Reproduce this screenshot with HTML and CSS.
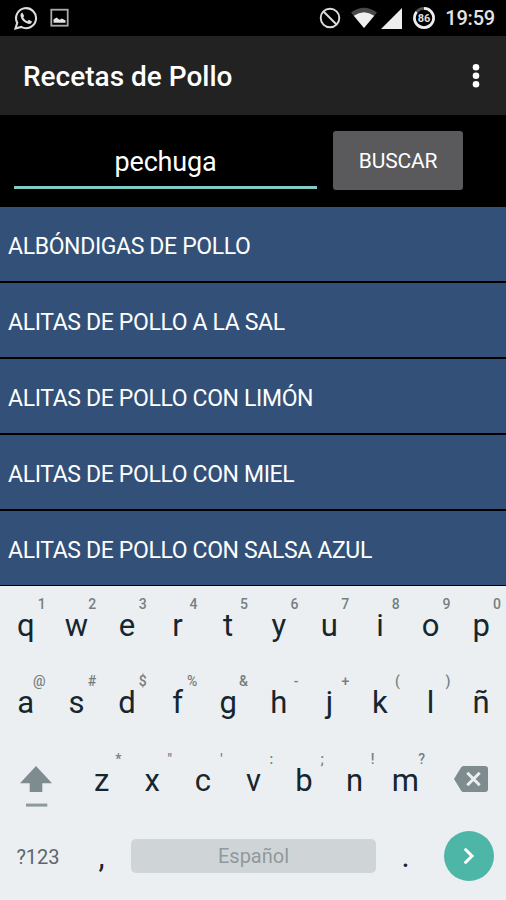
FILE: index.html
```html
<!DOCTYPE html>
<html lang="es">

<head>
	<meta charset="utf-8">
	<title>Recetas de Pollo</title>
	<link rel="stylesheet" href="styles.css">
</head>

<body>
	<div class="status-bar">
		<svg class="icon-whatsapp" width="24" height="25" viewBox="0 0 24 25">
			<path d="M1.5 22.5 L3.2 16.8 A10 10 0 1 1 7.2 20.9 Z" fill="none" stroke="#ddd" stroke-width="2.1" />
			<path d="M8.3 6.5 L10.2 10 L9.2 11.6 Q10.6 14.2 13.3 15.2 L14.9 13.7 L18 15.4 Q17.6 18.2 14.8 18 Q7.6 16.3 6.4 9.6 Q6.5 7 8.3 6.5 Z" fill="#ddd" />
		</svg>
		<svg class="icon-picture" width="20" height="20" viewBox="0 0 20 20">
			<rect x="1.3" y="1.7" width="16.4" height="16" fill="none" stroke="#aaa" stroke-width="1.8" />
			<path d="M3.5 14.8 V11.5 L6.5 9.5 L9.5 11.8 L12 10.5 L15.5 12.5 V14.8 Z" fill="#e4e4e4" />
		</svg>
		<div class="status-right">
			<svg width="22" height="22" viewBox="0 0 22 22">
				<circle cx="11" cy="11" r="9.3" fill="none" stroke="#ddd" stroke-width="1.9" />
				<path d="M4.5 4.5 L17.5 17.5" stroke="#ddd" stroke-width="1.9" />
			</svg>
			<svg class="icon-wifi" width="28" height="22" viewBox="0 0 28 22">
				<path d="M1 5.5 Q14 -4 27 5.5 L14 21 Z" fill="#484848" />
				<path d="M3.8 8.8 Q14 1.5 24.2 8.8 L14 21 Z" fill="#eee" />
			</svg>
			<svg class="icon-signal" width="21" height="21" viewBox="0 0 21 21">
				<path d="M21 0 V21 H0 Z" fill="#eee" />
			</svg>
			<svg class="icon-battery" width="24" height="24" viewBox="0 0 24 24">
				<circle cx="12" cy="12" r="9.6" fill="none" stroke="#555" stroke-width="2.6" />
				<circle cx="12" cy="12" r="9.6" fill="none" stroke="#eee" stroke-width="2.6" pathLength="100" stroke-dasharray="86 14" transform="rotate(-90 12 12)" />
				<text class="battery-level" x="12" y="15.8" text-anchor="middle">86</text>
			</svg>
			<div class="clock">19:59</div>
		</div>
	</div>

	<div class="app-bar">
		<div class="app-title">Recetas de Pollo</div>
		<svg width="10" height="26" viewBox="0 0 10 26">
			<circle cx="5" cy="4.2" r="3.3" fill="#fff" />
			<circle cx="5" cy="12.8" r="3.3" fill="#fff" />
			<circle cx="5" cy="21.2" r="3.3" fill="#fff" />
		</svg>
	</div>

	<div class="search">
		<div class="search-input">pechuga</div>
		<div class="search-button">BUSCAR</div>
	</div>

	<div class="recipes">
		<div class="recipe">ALBÓNDIGAS DE POLLO</div>
		<div class="recipe">ALITAS DE POLLO A LA SAL</div>
		<div class="recipe">ALITAS DE POLLO CON LIMÓN</div>
		<div class="recipe">ALITAS DE POLLO CON MIEL</div>
		<div class="recipe">ALITAS DE POLLO CON SALSA AZUL</div>
	</div>

	<div class="keyboard">
		<div class="keys">
			<div class="key"><span class="hint">1</span>q</div>
			<div class="key"><span class="hint">2</span>w</div>
			<div class="key"><span class="hint">3</span>e</div>
			<div class="key"><span class="hint">4</span>r</div>
			<div class="key"><span class="hint">5</span>t</div>
			<div class="key"><span class="hint">6</span>y</div>
			<div class="key"><span class="hint">7</span>u</div>
			<div class="key"><span class="hint">8</span>i</div>
			<div class="key"><span class="hint">9</span>o</div>
			<div class="key"><span class="hint">0</span>p</div>
		</div>
		<div class="keys">
			<div class="key"><span class="hint">@</span>a</div>
			<div class="key"><span class="hint">#</span>s</div>
			<div class="key"><span class="hint">$</span>d</div>
			<div class="key"><span class="hint">%</span>f</div>
			<div class="key"><span class="hint">&amp;</span>g</div>
			<div class="key"><span class="hint">-</span>h</div>
			<div class="key"><span class="hint">+</span>j</div>
			<div class="key"><span class="hint">(</span>k</div>
			<div class="key"><span class="hint">)</span>l</div>
			<div class="key">ñ</div>
		</div>
		<div class="keys">
			<div class="key-wide">
				<svg class="icon-shift" width="32" height="42" viewBox="0 0 32 42">
					<path d="M16 0 L32 17.3 H22.3 V26 H9.7 V17.3 H0 Z" fill="#7e8c90" />
					<rect x="6" y="37.6" width="21.3" height="3" fill="#8c989b" />
				</svg>
			</div>
			<div class="key"><span class="hint">*</span>z</div>
			<div class="key"><span class="hint">"</span>x</div>
			<div class="key"><span class="hint">'</span>c</div>
			<div class="key"><span class="hint">:</span>v</div>
			<div class="key"><span class="hint">;</span>b</div>
			<div class="key"><span class="hint">!</span>n</div>
			<div class="key"><span class="hint">?</span>m</div>
			<div class="key-wide">
				<svg class="icon-delete" width="34" height="26" viewBox="0 0 34 26">
					<path d="M9.5 0 H31 Q34 0 34 3 V23 Q34 26 31 26 H9.5 Q8 26 7 24.5 L0 13 L7 1.5 Q8 0 9.5 0 Z" fill="#7e8c90" />
					<path d="M13.3 6.7 L25.7 19.3 M25.7 6.7 L13.3 19.3" stroke="#eceff1" stroke-width="3" />
				</svg>
			</div>
		</div>
		<div class="keys-bottom">
			<div class="key-symbols">?123</div>
			<div class="key-mark">,</div>
			<div class="spacebar">Español</div>
			<div class="key-mark">.</div>
			<div class="enter">
				<svg width="12" height="18" viewBox="0 0 12 18">
					<path d="M1.7 1.7 L9 9 L1.7 16.3" fill="none" stroke="#fff" stroke-width="3" />
				</svg>
			</div>
		</div>
	</div>
</body>

</html>
```
FILE: styles.css
```css
body {
	margin: 0;
	width: 506px;
	height: 900px;
	overflow: hidden;
	background: #000;
	color: #fff;
	font-family: Roboto, sans-serif;
}

svg {
	display: block;
	flex: none;
}

.status-bar {
	display: flex;
	align-items: center;
	box-sizing: border-box;
	height: 36px;
	padding: 0 11px 0 14px;
}

.icon-picture {
	margin-left: 12px;
}

.status-right {
	display: flex;
	align-items: center;
	margin-left: auto;
}

.icon-wifi {
	margin-left: 9px;
}

.icon-signal {
	margin-left: 3px;
}

.icon-battery {
	margin-left: 10px;
}

.battery-level {
	font-size: 11px;
	font-weight: 700;
	fill: #ddd;
}

.clock {
	margin-left: 9px;
	font-size: 20px;
	font-weight: 500;
	letter-spacing: -0.2px;
	line-height: 38px;
	color: #e4e4e4;
}

.app-bar {
	display: flex;
	align-items: center;
	justify-content: space-between;
	box-sizing: border-box;
	height: 79px;
	padding: 0 25px 0 23px;
	background: #222;
}

.app-title {
	font-size: 28px;
	font-weight: 500;
	line-height: 79px;
	padding-top: 2px;
}

.search {
	display: flex;
	box-sizing: border-box;
	height: 92px;
	padding: 16px 14px 0;
}

.search-input {
	box-sizing: border-box;
	width: 303px;
	height: 58px;
	border-bottom: 3px solid #80cbc4;
	font-size: 27px;
	letter-spacing: -0.2px;
	line-height: 62px;
	text-align: center;
}

.search-button {
	width: 130px;
	height: 59px;
	margin-left: 16px;
	border-radius: 3px;
	background: #5a595b;
	font-size: 21px;
	letter-spacing: -0.2px;
	line-height: 61px;
	text-align: center;
}

.recipes {
	display: grid;
	grid-auto-rows: 74px;
	row-gap: 2px;
	height: 379px;
}

.recipe {
	padding-left: 8px;
	background: #335178;
	font-size: 23px;
	letter-spacing: -0.36px;
	line-height: 80px;
	white-space: nowrap;
}

.recipe:last-child {
	height: 73.5px;
}

.keyboard {
	position: relative;
	height: 314px;
	background: #eceff1;
	color: #16262e;
}

.keys {
	display: flex;
	height: 77.3px;
}

.key {
	position: relative;
	width: 50.6px;
	padding-left: 1px;
	box-sizing: border-box;
	font-size: 31px;
	line-height: 79px;
	text-align: center;
}

.hint {
	position: absolute;
	top: 9px;
	right: 5px;
	font-size: 14px;
	font-weight: 500;
	line-height: 18px;
	color: #757f82;
}

.key-wide {
	width: 75.9px;
}

.icon-shift {
	margin: 25px 0 0 20px;
}

.icon-delete {
	margin: 25px 0 0 24px;
}

.keys-bottom {
	display: flex;
	align-items: center;
	height: 77px;
}

.key-symbols {
	width: 76px;
	padding-top: 1px;
	font-size: 20px;
	text-align: center;
	color: #5c676b;
}

.key-mark {
	width: 51px;
	font-size: 31px;
	text-align: center;
}

.spacebar {
	width: 245px;
	height: 34px;
	margin: 0 4px;
	border-radius: 5px;
	background: #cfd5d7;
	font-size: 20px;
	line-height: 34px;
	text-align: center;
	color: #90999c;
}

.enter {
	display: flex;
	align-items: center;
	justify-content: center;
	width: 50px;
	height: 50px;
	margin-left: 13px;
	border-radius: 50%;
	background: #4db6a6;
}
```
